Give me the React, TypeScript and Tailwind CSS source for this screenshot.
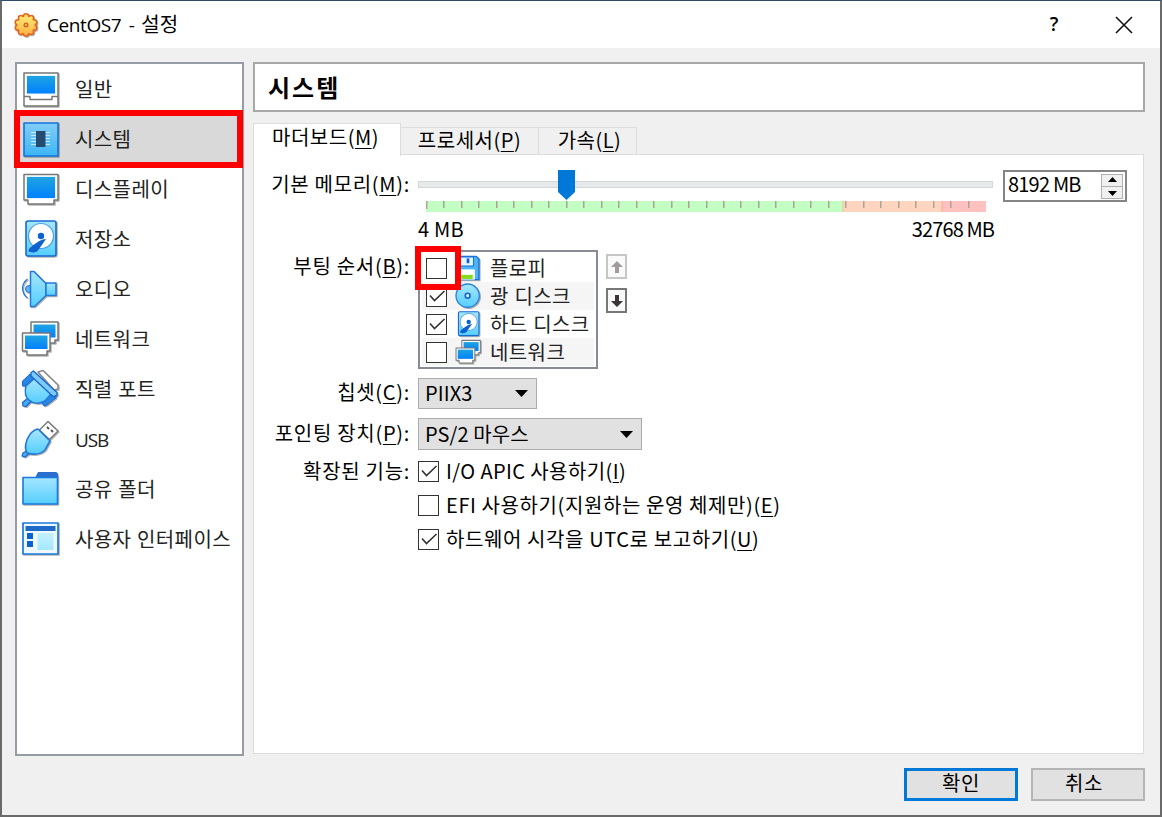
import type { ReactNode } from "react";
import clsx from "clsx";

// Shared gradients for the blue VirtualBox-style icons
function IconDefs() {
  return (
    <svg width="0" height="0" className="absolute" aria-hidden="true">
      <defs>
        <linearGradient id="screen" x1="0" y1="0" x2="0" y2="1">
          <stop offset="0" stopColor="#1fa5e0" />
          <stop offset="1" stopColor="#0080ff" />
        </linearGradient>
        <linearGradient id="sky" x1="0" y1="0" x2="0" y2="1">
          <stop offset="0" stopColor="#a6e6ff" />
          <stop offset="1" stopColor="#55ceff" />
        </linearGradient>
        <linearGradient id="chip" x1="0" y1="0" x2="0" y2="1">
          <stop offset="0" stopColor="#82cdf6" />
          <stop offset="1" stopColor="#3db5f5" />
        </linearGradient>
        <linearGradient id="pane" x1="0" y1="0" x2="0" y2="1">
          <stop offset="0" stopColor="#c3f1ff" />
          <stop offset="1" stopColor="#a5e8ff" />
        </linearGradient>
        <linearGradient id="gear" x1="0" y1="0" x2="0" y2="1">
          <stop offset="0" stopColor="#ffe873" />
          <stop offset="1" stopColor="#ffb648" />
        </linearGradient>
      </defs>
    </svg>
  );
}

function Icon({ children, size = "lg" }: { children: ReactNode; size?: "lg" | "sm" }) {
  return (
    <svg
      viewBox="0 0 38 38"
      fill="none"
      strokeLinejoin="round"
      className={clsx(
        "shrink-0 drop-shadow-[1px_1px_0.5px_rgba(0,0,0,0.3)]",
        size === "lg" ? "h-[38px] w-[38px]" : "h-[26px] w-[26px]"
      )}
    >
      {children}
    </svg>
  );
}

const GeneralIcon = () => (
  <Icon>
    <path d="M3 3h34v33H3z" fill="#fff" stroke="#777" strokeWidth="1.5" />
    <path d="M5.5 5.5h29V24h-29z" fill="url(#screen)" stroke="#e4f5ff" strokeWidth="1" />
    <path d="M3 26.5h6v3h22v-3h6" stroke="#777" strokeWidth="1.5" />
  </Icon>
);

const SystemIcon = () => (
  <Icon>
    <path d="M3 3h34v33H3z" fill="url(#chip)" stroke="#1273dc" strokeWidth="1.6" />
    <path d="M10 12.5h19M10 15.5h19M10 18.5h19M10 21.5h19M10 24.5h19" stroke="#c5e8fb" strokeWidth="1" />
    <path d="M15 11h9.5v16H15z" fill="#264b70" />
  </Icon>
);

const DisplayIcon = () => (
  <Icon>
    <path d="M3 4.5h34V30h-4v4H7v-4H3z" fill="#fff" stroke="#777" strokeWidth="1.5" />
    <path d="M5.5 6.5h29v22h-29z" fill="url(#screen)" stroke="#e4f5ff" strokeWidth="1" />
  </Icon>
);

const DiskIcon = ({ size }: { size?: "lg" | "sm" }) => (
  <Icon size={size}>
    <rect x="5" y="1" width="30" height="35" rx="2" fill="url(#sky)" stroke="#1769d2" strokeWidth="1.6" />
    <circle cx="20" cy="16" r="12.5" fill="#fff" stroke="#4c9fe6" strokeWidth="1.2" />
    <path d="M25 19c-5 0-10 4-15 8-3 2-3 5-1 5 4 1 8 0 9-3z" fill="#0f62ce" />
    <circle cx="20" cy="16" r="3.2" fill="#0f62ce" />
  </Icon>
);

const AudioIcon = () => (
  <Icon>
    <circle cx="8" cy="19" r="3.5" fill="#5ab3f4" stroke="#2578d8" />
    <path d="M9.5 1.5H13l12 12v12l-11.5 11h-4z" fill="url(#sky)" stroke="#2578d8" strokeWidth="1.5" />
    <path d="M25 13h10v12.5H25z" fill="url(#sky)" stroke="#2578d8" strokeWidth="1.5" />
    <path d="M6.5 9C0 14 0 23 6.5 28" stroke="#2578d8" strokeWidth="1.3" />
  </Icon>
);

const NetworkIcon = ({ size }: { size?: "lg" | "sm" }) => (
  <Icon size={size}>
    <path d="M10 2H37v18h-3v3H13v-3h-3z" fill="#fff" stroke="#777" strokeWidth="1.5" />
    <path d="M12.5 4.5h22v13h-22z" fill="url(#screen)" />
    <path d="M1.5 13H29v18h-3v4H6v-4H1.5z" fill="#fff" stroke="#777" strokeWidth="1.5" />
    <path d="M4 15.5h22.500V29H4z" fill="url(#screen)" />
  </Icon>
);

const SerialIcon = () => (
  <Icon>
    <path d="M17 2l5-1.500L37 15v4l-4 1z" fill="#fff" stroke="#888" strokeWidth="1.5" />
    <path d="M1.500 11L9 4l3 5-8 7H1.500zM21 33l10-9 4 1v3l-9 7-3 1z" fill="#2a86e4" stroke="#1769d2" />
    <path d="M7 28l-5.500 4.500L2 36l3 .500 5-5z" fill="#49a8f2" stroke="#1769d2" strokeWidth="1.2" />
    <path d="M14 8l16 16-6 7c-5 3-12 3-16-1-5-4-4-10-3-14z" fill="url(#sky)" stroke="#2578d8" strokeWidth="1.500" />
    <path d="M12.500 1L36 22.500v3l-4 1L10 6V2.500z" fill="#7fcaf8" stroke="#1769d2" strokeWidth="1.400" />
  </Icon>
);

const UsbIcon = () => (
  <Icon>
    <path d="M18.500 10L27 1.500 37 11l-8.500 8.500z" fill="#fff" stroke="#777" strokeWidth="1.400" />
    <path d="M26 7l2 2M30 10l2 2" stroke="#555" strokeWidth="2" />
    <path d="M7 30l-5 3-1 3 3 1 5-4z" fill="#49a8f2" stroke="#1769d2" strokeWidth="1.200" />
    <path d="M17 9l12 12-5 9c-4 4-11 5-18 3-3-5-1-13 2-17 2-4 5-6 9-7z" fill="url(#sky)" stroke="#2578d8" strokeWidth="1.600" />
  </Icon>
);

const FolderIcon = () => (
  <Icon>
    <path d="M14 8l3-6h18.500l1.500 2v5H14z" fill="#2a6fd0" />
    <path d="M2 7.500h34.500V34H2z" fill="url(#sky)" stroke="#1a78de" strokeWidth="1.600" />
  </Icon>
);

const InterfaceIcon = () => (
  <Icon>
    <path d="M2 3h35v31H2z" fill="#eef9ff" stroke="#1a78de" strokeWidth="1.700" />
    <path d="M4.500 6h30v5h-30z" fill="#1f69c9" />
    <path d="M6 13h6v6H6zM6 21h6v6H6z" fill="#0a62d2" />
    <path d="M16.500 13h16v17h-16z" fill="url(#pane)" />
  </Icon>
);

const FloppyIcon = () => (
  <Icon size="sm">
    <path d="M1 2h30l4 4v30H1z" fill="#4bb4f6" stroke="#1672dc" strokeWidth="2" />
    <path d="M8 3h19v13H8z" fill="#e6f6ff" stroke="#1672dc" strokeWidth="1.500" />
    <path d="M17 5h4v7h-4z" fill="#0a62d2" />
    <path d="M7 21h22v15H7z" fill="#fff" />
    <path d="M9 29h17v6H9z" fill="#86dc1c" />
  </Icon>
);

const DiscIcon = () => (
  <Icon size="sm">
    <circle cx="18.500" cy="18.500" r="17" fill="url(#sky)" stroke="#2b82dc" strokeWidth="2" />
    <circle cx="18.500" cy="18.500" r="3.500" fill="#d8f3ff" stroke="#1769d2" strokeWidth="2.500" />
  </Icon>
);

const teeth = Array.from({ length: 10 }, (_, i) => {
  const a = ((i + 0.5) * Math.PI) / 5;
  return { x: 13 + 8.6 * Math.cos(a), y: 13 + 8.6 * Math.sin(a) };
});

function GearIcon() {
  return (
    <svg viewBox="0 0 26 26" className="h-[26px] w-[26px] drop-shadow-[1px_1px_0.5px_rgba(0,0,0,0.3)]">
      {teeth.map((t, i) => (
        <circle key={i} cx={t.x} cy={t.y} r="3.300" fill="#e2661e" />
      ))}
      {teeth.map((t, i) => (
        <circle key={i} cx={t.x} cy={t.y} r="1.800" fill={t.y < 13 ? "#ffe063" : "#ffb54a"} />
      ))}
      <circle cx="13" cy="13" r="8.600" fill="url(#gear)" />
      <circle cx="13" cy="13" r="1.900" fill="#f5a742" stroke="#c8641c" strokeWidth="1.200" />
    </svg>
  );
}

const categories = [
  { label: "일반", icon: <GeneralIcon /> },
  { label: "시스템", icon: <SystemIcon />, active: true },
  { label: "디스플레이", icon: <DisplayIcon /> },
  { label: "저장소", icon: <DiskIcon /> },
  { label: "오디오", icon: <AudioIcon /> },
  { label: "네트워크", icon: <NetworkIcon /> },
  { label: "직렬 포트", icon: <SerialIcon /> },
  { label: "USB", icon: <UsbIcon />, latin: true },
  { label: "공유 폴더", icon: <FolderIcon /> },
  { label: "사용자 인터페이스", icon: <InterfaceIcon /> },
];

const bootDevices = [
  { label: "플로피", icon: <FloppyIcon />, checked: false },
  { label: "광 디스크", icon: <DiscIcon />, checked: true },
  { label: "하드 디스크", icon: <DiskIcon size="sm" />, checked: true },
  { label: "네트워크", icon: <NetworkIcon size="sm" />, checked: false },
];

// Text followed by its access key in brackets
function Mnemonic({ text, k, suffix = "" }: { text: string; k: string; suffix?: string }) {
  return (
    <span className="whitespace-nowrap">
      {text}(<span className="underline decoration-1 underline-offset-[3px]">{k}</span>){suffix}
    </span>
  );
}

function Checkbox({ checked }: { checked: boolean }) {
  return (
    <span className="flex h-[21px] w-[21px] shrink-0 items-center justify-center border-[1.5px] border-[#333] bg-white">
      {checked && (
        <svg viewBox="0 0 18 18" className="h-[18px] w-[18px]" fill="none">
          <path d="M2 8.500L6.500 13.500 16.500 4" stroke="#333" strokeWidth="1.600" />
        </svg>
      )}
    </span>
  );
}

function Row({ label, className, children }: { label?: ReactNode; className?: string; children: ReactNode }) {
  return (
    <div className={clsx("flex", className)}>
      <div className="flex w-[156px] shrink-0 justify-end tracking-[0.7px]">{label}</div>
      <div className="ml-2 flex">{children}</div>
    </div>
  );
}

function Combo({ value, className }: { value: string; className: string }) {
  return (
    <div className={clsx("flex items-center justify-between border-[1.5px] border-[#adadad] bg-[#e1e1e1] pl-[6px] pr-2", className)}>
      <span className="whitespace-nowrap pb-px tracking-[0.1px]">{value}</span>
      <svg viewBox="0 0 13 7" className="h-[7px] w-[13px]">
        <path d="M0 0h13L6.500 7z" fill="#000" />
      </svg>
    </div>
  );
}

function ArrowButton({ down }: { down?: boolean }) {
  return (
    <span
      className={clsx(
        "flex h-[25px] w-[21px] items-center justify-center border-2 bg-[#fafafa]",
        down ? "border-[#777] text-[#3b3535]" : "border-[#c6c6c6] text-[#a09c9c]"
      )}
    >
      <svg viewBox="0 0 12 12" className={clsx("h-3 w-3", down && "rotate-180")}>
        <path d="M6 0l6 6H8v6H4V6H0z" fill="currentColor" />
      </svg>
    </span>
  );
}

function MemorySlider() {
  return (
    <div className="w-[575px]">
      <div className="relative mt-[11px] h-[7px] border-[1.5px] border-[#d3d6d6] bg-[#e7eaea]">
        <svg viewBox="0 0 17 30" className="absolute -top-[12px] left-[139px] h-[30px] w-[17px]">
          <path d="M0 0h17v22l-8.500 8L0 22z" fill="#0078d7" />
        </svg>
      </div>
      <svg viewBox="0 0 560 11" className="ml-2 mt-[13px] h-[11px] w-[560px]">
        <rect width="417" height="11" fill="#c3ffc3" />
        <rect x="417" width="99" height="11" fill="#ffd5c0" />
        <rect x="516" width="44" height="11" fill="#ffc0c0" />
        <path d="M417 0v11" stroke="#efc38a" />
        <path d="M516 0v11" stroke="#ffa79c" />
        {Array.from({ length: 32 }, (_, i) => (
          <rect key={i} x={Math.round(i * 17.47)} width="1.500" height={i ? 7 : 8} fill="#a9a596" />
        ))}
      </svg>
      <div className="mt-[7px] flex justify-between leading-5">
        <span className="tracking-[0.2px]">4 MB</span>
        <span className="-mr-[1px] tracking-[-0.9px]">32768 MB</span>
      </div>
    </div>
  );
}

function Sidebar() {
  return (
    <nav className="relative h-[694px] w-[229px] shrink-0 border-2 border-[#959ca6] bg-white font-['Open_Sans','Noto_Sans_CJK_KR',sans-serif] text-[20px] tracking-[0.4px] text-[#222]">
      {categories.map((c) => (
        <div key={c.label} className={clsx("flex h-[50px] items-center pl-[4px]", c.active && "bg-[#d9d9d9]")}>
          {c.icon}
          <span className={clsx("ml-[16px] whitespace-nowrap pt-0.5 leading-6", c.latin && "text-[19px] tracking-[-1.1px]")}>
            {c.label}
          </span>
        </div>
      ))}
      <div className="absolute -left-[3px] top-[46px] h-[58px] w-[229px] border-[6px] border-[#fe0000]" />
    </nav>
  );
}

function BootOrder() {
  return (
    <div className="relative h-[119px] w-[180px] border-2 border-[#868b95] bg-white p-[2px] font-['Open_Sans','Noto_Sans_CJK_KR',sans-serif] tracking-[0.4px] text-[#222]">
      {bootDevices.map((d) => (
        <div key={d.label} className="flex h-[28px] items-center pl-1 even:bg-[#f5f5f5]">
          <Checkbox checked={d.checked} />
          <span className="ml-[8px]">{d.icon}</span>
          <span className="ml-[9px] whitespace-nowrap pt-px leading-6">{d.label}</span>
        </div>
      ))}
      <div className="absolute -left-[5px] -top-[6px] h-[44px] w-[46px] border-[6px] border-[#fe0000]" />
    </div>
  );
}

function SystemPage() {
  return (
    <div className="h-[600px] w-[891px] border-[1.5px] border-[#dcdcdc] bg-white leading-6">
      <Row className="pt-[15px]" label={<div className="pt-[2px]"><Mnemonic text="기본 메모리" k="M" suffix=":" /></div>}>
        <MemorySlider />
        <div className="ml-[10px] flex h-[32px] w-[124px] items-center justify-between border-2 border-[#858585] pl-[3px] pr-[2px]">
          <span className="whitespace-nowrap pb-1 tracking-[-0.8px]">8192 MB</span>
          <span className="flex h-[25px] w-[22px] flex-col items-center justify-around border border-[#b0b0b0] bg-[#f0f0f0]">
            <svg viewBox="0 0 9 5" className="h-[5px] w-[9px]"><path d="M0 5h9L4.500 0z" /></svg>
            <span className="h-px w-full bg-[#b0b0b0]" />
            <svg viewBox="0 0 9 5" className="h-[5px] w-[9px]"><path d="M0 0h9L4.500 5z" /></svg>
          </span>
        </div>
      </Row>
      <Row className="mt-[11px]" label={<div className="pt-1"><Mnemonic text="부팅 순서" k="B" suffix=":" /></div>}>
        <BootOrder />
        <div className="ml-2 flex flex-col gap-[9px] pt-1">
          <ArrowButton />
          <ArrowButton down />
        </div>
      </Row>
      <Row className="mt-[9px]" label={<div className="pt-[2px]"><Mnemonic text="칩셋" k="C" suffix=":" /></div>}>
        <Combo value="PIIX3" className="h-[31px] w-[119px]" />
      </Row>
      <Row className="mt-[9px]" label={<div className="pt-[3px]"><Mnemonic text="포인팅 장치" k="P" suffix=":" /></div>}>
        <Combo value="PS/2 마우스" className="h-[32px] w-[224px]" />
      </Row>
      <Row className="mt-[9px]" label={<span className="whitespace-nowrap">확장된 기능:</span>}>
        <div className="flex flex-col gap-[10px] tracking-[0.6px]">
          <div className="flex items-center gap-[7px]">
            <Checkbox checked />
            <span className="tracking-[0.4px]"><Mnemonic text="I/O APIC 사용하기" k="I" /></span>
          </div>
          <div className="flex items-center gap-[7px]">
            <Checkbox checked={false} />
            <Mnemonic text="EFI 사용하기(지원하는 운영 체제만)" k="E" />
          </div>
          <div className="flex items-center gap-[7px]">
            <Checkbox checked />
            <Mnemonic text="하드웨어 시각을 UTC로 보고하기" k="U" />
          </div>
        </div>
      </Row>
    </div>
  );
}

export default function App() {
  return (
    <div className="flex h-[817px] w-[1162px] flex-col overflow-hidden border-2 border-t-[1.5px] border-[#6a6a6a] border-t-[#2c4a68] bg-[#f0f0f0] font-['Noto_Sans_CJK_KR',sans-serif] text-[20px] tracking-[0.5px] text-black">
      <IconDefs />
      <header className="flex h-[47px] shrink-0 items-center bg-white pl-[11px] pr-[27px] font-['Open_Sans','Noto_Sans_CJK_KR',sans-serif]">
        <GearIcon />
        <span className="ml-[8px] whitespace-nowrap text-[19px] tracking-[-0.400px]">
          CentOS7 <span className="ml-[3px]">-</span> <span className="ml-[2px] text-[20px] tracking-[0.300px]">설정</span>
        </span>
        <span className="ml-auto text-[19px] font-semibold">?</span>
        <svg viewBox="0 0 18 18" className="ml-[56px] h-[18px] w-[18px]" fill="none">
          <path d="M1 1l16 16M17 1L1 17" stroke="#111" strokeWidth="1.600" />
        </svg>
      </header>

      <main className="flex gap-[9px] pl-[13px] pt-[14px]">
        <Sidebar />
        <section>
          <div className="flex h-[50px] w-[892px] items-center border-2 border-[#a8a8a8] bg-white pl-[13px] text-[24px] font-bold tracking-[2px]">
            시스템
          </div>
          <div className="mt-[11px] flex h-[31px] items-end leading-6">
            <div className="relative z-10 -mb-[2px] flex h-[33px] w-[148px] justify-center border-[1.5px] border-b-0 border-[#dcdcdc] bg-white pr-[3px] pt-px">
              <Mnemonic text="마더보드" k="M" />
            </div>
            <div className="flex h-[27px] w-[138px] justify-center border-t-[1.5px] border-r-[1.5px] border-[#dcdcdc]">
              <Mnemonic text="프로세서" k="P" />
            </div>
            <div className="flex h-[27px] w-[98px] justify-center border-t-[1.5px] border-r-[1.5px] border-[#dcdcdc] pl-[4px]">
              <Mnemonic text="가속" k="L" />
            </div>
          </div>
          <SystemPage />
        </section>
      </main>

      <footer className="mt-[12px] flex justify-end gap-[13px] pr-[15px]">
        <button className="flex h-[33px] w-[114px] items-center justify-center border-[3px] border-[#0078d7] bg-[#e1e1e1] pb-1">확인</button>
        <button className="flex h-[33px] w-[114px] items-center justify-center border-2 border-[#b5b5b5] bg-[#e1e1e1] pb-1 pr-2">취소</button>
      </footer>
    </div>
  );
}
